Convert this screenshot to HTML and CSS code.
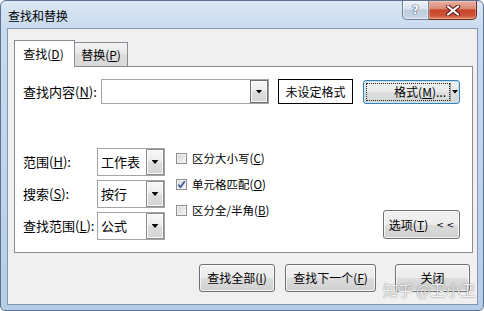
FILE: index.html
```html
<!DOCTYPE html>
<html lang="zh-CN">
<head>
<meta charset="utf-8">
<title>查找和替换</title>
<link rel="stylesheet" href="styles.css">
</head>
<body>
<div class="window">
  <div class="titlebar">
    <span class="title">查找和替换</span>
    <div class="caps">
      <div class="cap help"><span class="help-glyph">?</span></div>
      <div class="cap close">
        <svg width="16" height="11" viewBox="0 0 16 11">
          <path d="M3 1.5 L13 9.5 M13 1.5 L3 9.5" stroke="#5a2219" stroke-width="4.2" stroke-linecap="round" fill="none"/>
          <path d="M3 1.5 L13 9.5 M13 1.5 L3 9.5" stroke="#ffffff" stroke-width="2.2" stroke-linecap="round" fill="none"/>
        </svg>
      </div>
    </div>
  </div>
  <div class="client">
    <div class="tabs">
      <div class="tab active">查找(<u>D</u>)</div>
      <div class="tab inactive">替换(<u>P</u>)</div>
    </div>
    <div class="panel">
      <div class="find-row">
        <span class="lbl">查找内容(<u>N</u>):</span>
        <div class="combo find-input"><span class="val"></span><span class="drop"><i class="arrow"></i></span></div>
        <div class="fmt-preview">未设定格式</div>
        <div class="btn fmt-btn">
          <span class="fmt-main"><span class="focus-rect">格式(<u>M</u>)...</span></span>
          <span class="fmt-split"><i class="arrow"></i></span>
        </div>
      </div>
      <div class="lower">
        <div class="opt-grid">
          <span class="lbl">范围(<u>H</u>):</span>
          <div class="combo"><span class="val">工作表</span><span class="drop"><i class="arrow"></i></span></div>
          <span class="lbl">搜索(<u>S</u>):</span>
          <div class="combo"><span class="val">按行</span><span class="drop"><i class="arrow"></i></span></div>
          <span class="lbl">查找范围(<u>L</u>):</span>
          <div class="combo"><span class="val">公式</span><span class="drop"><i class="arrow"></i></span></div>
        </div>
        <div class="checks">
          <div class="check"><span class="box"></span>区分大小写(<u>C</u>)</div>
          <div class="check"><span class="box checked"><svg width="9" height="9" viewBox="0 0 9 9"><path d="M1.3 4.6 L3.5 7.2 L7.8 1.2" stroke="#3c56a0" stroke-width="1.7" fill="none"/></svg></span>单元格匹配(<u>O</u>)</div>
          <div class="check"><span class="box"></span>区分全/半角(<u>B</u>)</div>
        </div>
        <div class="btn options-btn">选项(<u>T</u>)<span class="chev">&lt; &lt;</span></div>
      </div>
    </div>
    <div class="actions">
      <div class="btn act-all">查找全部(<u>I</u>)</div>
      <div class="btn act-next">查找下一个(<u>F</u>)</div>
      <div class="btn act-close">关闭</div>
    </div>
  </div>
  <div class="watermark">知乎 @卫小卫</div>
</div>
</body>
</html>
```
FILE: styles.css
```css
html, body {
  margin: 0;
  padding: 0;
}
body {
  width: 484px;
  height: 311px;
  overflow: hidden;
  font-family: "Noto Sans CJK SC", "Noto Sans", sans-serif;
  color: #000;
}
u { text-decoration: underline; text-underline-offset: 1px; }

.window {
  box-sizing: border-box;
  width: 484px;
  height: 311px;
  border: 1px solid #5d7290;
  border-radius: 6px 6px 5px 5px;
  background: linear-gradient(#dbe7f5 0, #c8dbef 27px, #bed4ec 60%, #b6cde8 100%);
  display: flex;
  flex-direction: column;
  position: relative;
  overflow: hidden;
}

.titlebar {
  height: 27px;
  flex: none;
  display: flex;
  align-items: flex-start;
}
.title {
  font-size: 12px;
  line-height: 12px;
  margin: 9px 0 0 7px;
}
.caps {
  margin-left: auto;
  margin-right: 6px;
  display: flex;
}
.cap {
  box-sizing: border-box;
  height: 19px;
  border: 1px solid #6e7f96;
  border-top: none;
  display: flex;
  align-items: center;
  justify-content: center;
}
.help {
  width: 27px;
  border-radius: 0 0 0 5px;
  background: linear-gradient(#eef3f9, #d9e3ef 45%, #bccbdd 50%, #c9d7e8);
  box-shadow: inset 0 0 0 1px rgba(255,255,255,.5);
}
.help-glyph {
  font-family: "DejaVu Sans", sans-serif;
  font-weight: bold;
  font-size: 12px;
  line-height: 12px;
  color: #fff;
  text-shadow: 0 0 1px #45566e, 0 0 1px #45566e, 0 0 1px #45566e;
}
.close {
  width: 48px;
  border-left: none;
  border-color: #6d2a20;
  border-radius: 0 0 5px 0;
  background: linear-gradient(#e9b2a4, #da8a74 42%, #c7442b 50%, #cf5235 80%, #e08b67);
  box-shadow: inset 0 0 0 1px rgba(255,220,210,.35);
}

.client {
  flex: 1;
  margin: 0 5px 5px 6px;
  border: 1px solid #8597ad;
  background: #f0f0f0;
  padding: 11px 0 0 6px;
}

.tabs {
  display: flex;
  align-items: flex-end;
  height: 26px;
}
.tab {
  box-sizing: border-box;
  border: 1px solid #898c95;
  border-bottom: none;
  font-size: 12px;
  line-height: 14px;
  display: flex;
  align-items: center;
  justify-content: center;
}
.tab.active {
  width: 61px;
  height: 27px;
  margin-bottom: -1px;
  padding-right: 2px;
  background: #fff;
  position: relative;
  z-index: 1;
}
.tab.inactive {
  width: 54px;
  height: 24px;
  margin-left: -1px;
  background: linear-gradient(#f3f3f3, #e6e6e6 50%, #dddddd 50%, #d9d9d9);
}

.panel {
  box-sizing: border-box;
  width: 459px;
  height: 187px;
  border: 1px solid #898c95;
  background: #fff;
  padding: 12px 12px 0 8px;
}

.find-row {
  display: flex;
  align-items: center;
  height: 25px;
}
.lbl {
  font-size: 13px;
  line-height: 16px;
  white-space: nowrap;
}
.find-row .lbl { width: 78px; flex: none; }

.combo {
  box-sizing: border-box;
  display: flex;
  border: 1px solid #a4a4a4;
  background: #fff;
}
.combo .val {
  flex: 1;
  padding-left: 3px;
  font-size: 13px;
  line-height: 16px;
  display: flex;
  align-items: center;
}
.combo .drop {
  box-sizing: border-box;
  width: 18px;
  border: 1px solid #8c8c8c;
  background: linear-gradient(#f8f8f8, #ececec 50%, #dedede 50%, #d4d4d4);
  box-shadow: inset 0 0 0 1px rgba(255,255,255,.8);
  display: flex;
  align-items: center;
  justify-content: center;
}
.arrow {
  display: block;
  width: 7px;
  height: 4px;
  background: #000;
  clip-path: polygon(0 0, 100% 0, 50% 100%);
}
.find-input {
  width: 168px;
  height: 25px;
  flex: none;
}
.find-input .drop { border-color: #6f6f6f; }

.fmt-preview {
  box-sizing: border-box;
  margin-left: 9px;
  width: 75px;
  height: 25px;
  border: 1px solid #000;
  font-size: 12px;
  line-height: 14px;
  display: flex;
  align-items: center;
  justify-content: center;
  flex: none;
}

.btn {
  box-sizing: border-box;
  border: 1px solid #707070;
  border-radius: 3px;
  background: linear-gradient(#f2f2f2 0%, #ebebeb 50%, #dddddd 50%, #cfcfcf 100%);
  box-shadow: inset 0 0 0 1px rgba(255,255,255,.75);
  font-size: 12px;
  line-height: 14px;
  display: flex;
  align-items: center;
  justify-content: center;
  white-space: nowrap;
  flex: none;
}
.fmt-btn {
  margin-left: 10px;
  width: 97px;
  height: 24px;
  border-color: #3c7fb1;
  box-shadow: inset 0 0 0 1px #bfe3f7;
  background: linear-gradient(#f0f0f0 0%, #e9e9e9 50%, #dedede 50%, #d6d6d6 100%);
  align-items: stretch;
  justify-content: flex-start;
}
.fmt-main {
  flex: 1;
  display: flex;
  padding: 2px 0 2px 2px;
}
.focus-rect {
  flex: 1;
  border: 1px dotted #222;
  display: flex;
  align-items: center;
  justify-content: flex-end;
  padding-right: 3px;
}
.fmt-split {
  width: 8px;
  border-left: 1px solid #9a9a9a;
  margin: 2px 0;
  display: flex;
  align-items: center;
  justify-content: center;
}

.lower {
  display: flex;
  margin-top: 44px;
}
.opt-grid {
  display: grid;
  grid-template-columns: 74px 68px;
  grid-auto-rows: 28px;
  row-gap: 4px;
  align-items: center;
}
.opt-grid .combo { height: 28px; }

.checks {
  margin: -3px 0 0 11px;
  display: flex;
  flex-direction: column;
}
.check {
  height: 26px;
  display: flex;
  align-items: center;
  font-size: 11.5px;
  line-height: 14px;
  white-space: nowrap;
}
.box {
  box-sizing: border-box;
  width: 11px;
  height: 11px;
  border: 1px solid #8e8f8f;
  background: linear-gradient(135deg, #d2d4d7, #f6f6f6);
  box-shadow: inset 0 0 0 1px #f4f4f4;
  margin-right: 5px;
  display: flex;
  align-items: center;
  justify-content: center;
}

.options-btn {
  margin-left: auto;
  align-self: flex-end;
  width: 77px;
  height: 29px;
  margin-bottom: 1px;
}
.chev {
  margin-left: 8px;
  font-family: "DejaVu Sans", sans-serif;
  font-size: 9px;
}

.actions {
  display: flex;
  justify-content: flex-end;
  margin-top: 11px;
  padding-right: 7px;
}
.actions .btn { height: 28px; }
.act-all { width: 76px; margin-right: 10px; }
.act-next { width: 91px; margin-right: 19px; }
.act-close { width: 75px; }

.watermark {
  position: absolute;
  left: 382px;
  top: 281px;
  font-size: 15px;
  line-height: 16px;
  color: rgba(255,255,255,.92);
  text-shadow: 0 0 1px rgba(0,0,0,.45), 0 0 2px rgba(0,0,0,.25);
  white-space: nowrap;
  z-index: 5;
}
```
